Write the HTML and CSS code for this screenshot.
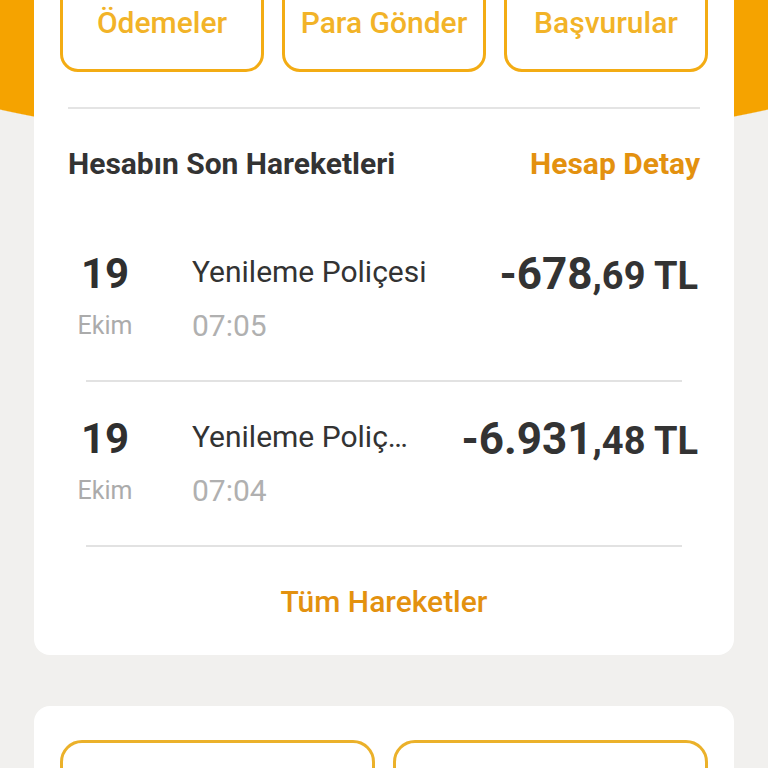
FILE: index.html
```html
<!DOCTYPE html>
<html lang="tr">
<head>
    <meta charset="UTF-8">
    <meta name="viewport" content="width=device-width, initial-scale=1.0">
    <title>Hesabım</title>
    <link rel="stylesheet" href="styles.css">
</head>
<body>
    <div id="page">
        <!-- Hesap kartı -->
        <div class="card account-card">
            <div class="quick-actions">
                <button class="quick-button">Ödemeler</button>
                <button class="quick-button">Para Gönder</button>
                <button class="quick-button">Başvurular</button>
            </div>

            <div class="divider"></div>

            <div class="section-header">
                <span class="section-title">Hesabın Son Hareketleri</span>
                <a class="section-link">Hesap Detay</a>
            </div>

            <div class="transaction">
                <div class="tx-date">
                    <div class="tx-day">19</div>
                    <div class="tx-month">Ekim</div>
                </div>
                <div class="tx-info">
                    <div class="tx-title">Yenileme Poliçesi</div>
                    <div class="tx-time">07:05</div>
                </div>
                <div class="tx-amount"><span class="amount-main">-678</span>,69 TL</div>
            </div>
            <div class="row-divider"></div>

            <div class="transaction">
                <div class="tx-date">
                    <div class="tx-day">19</div>
                    <div class="tx-month">Ekim</div>
                </div>
                <div class="tx-info">
                    <div class="tx-title">Yenileme Poliçesi</div>
                    <div class="tx-time">07:04</div>
                </div>
                <div class="tx-amount"><span class="amount-main">-6.931</span>,48 TL</div>
            </div>
            <div class="row-divider"></div>

            <a class="all-link">Tüm Hareketler</a>
        </div>

        <!-- Alt kart -->
        <div class="card bottom-card">
            <div class="wide-actions">
                <button class="quick-button wide"></button>
                <button class="quick-button wide"></button>
            </div>
        </div>
    </div>
</body>
</html>
```

FILE: styles.css
```css
body {
    margin: 0;
    padding: 0;
    background: radial-gradient(ellipse 600px 159px at 50% -12px, #f5a300 99.4%, #f1f0ee 100%) no-repeat, #f1f0ee;
    font-family: 'Roboto', 'Liberation Sans', sans-serif;
    overflow: hidden;
    height: 768px;
}

#page {
    padding: 0 34px;
}

.card {
    background: white;
    border-radius: 16px;
}

.account-card {
    margin-top: -80px;
    padding: 20px 26px 37px;
}

.quick-actions {
    display: grid;
    grid-template-columns: repeat(3, 1fr);
    gap: 18px;
}

.quick-button {
    height: 132px;
    display: flex;
    align-items: flex-end;
    justify-content: center;
    padding: 0 0 31px;
    background: white;
    border: 3px solid #f3ac14;
    border-radius: 18px;
    color: #f2b328;
    font-family: inherit;
    font-size: 30px;
    font-weight: 500;
    line-height: 30px;
    white-space: nowrap;
}

.divider {
    height: 2px;
    background: #e4e4e4;
    margin: 35px 8px 0;
}

.section-header {
    display: flex;
    justify-content: space-between;
    align-items: center;
    margin: 39px 8px 37px;
    line-height: 32px;
}

.section-title {
    font-size: 30px;
    font-weight: 700;
    color: #333333;
}

.section-link {
    font-size: 30px;
    font-weight: 700;
    color: #e3910f;
}

.transaction {
    display: flex;
    align-items: flex-start;
    padding: 35px 10px 39px 8px;
}

.tx-date {
    width: 74px;
    text-align: center;
    flex-shrink: 0;
}

.tx-day {
    font-size: 42px;
    font-weight: 700;
    line-height: 44px;
    color: #2f2f2f;
}

.tx-month {
    margin-top: 15px;
    font-size: 25px;
    line-height: 30px;
    color: #ababab;
}

.tx-info {
    flex: 1;
    min-width: 0;
    margin: 0 48px 0 50px;
}

.tx-title {
    font-size: 30px;
    line-height: 40px;
    color: #333333;
    white-space: nowrap;
    overflow: hidden;
    text-overflow: ellipsis;
}

.tx-time {
    margin-top: 19px;
    font-size: 30px;
    line-height: 30px;
    color: #b0b0b0;
}

.tx-amount {
    flex-shrink: 0;
    font-size: 38px;
    font-weight: 700;
    line-height: 44px;
    color: #333333;
    white-space: nowrap;
}

.amount-main {
    font-size: 44px;
}

.row-divider {
    height: 2px;
    background: #e2e2e2;
    margin: 0 26px;
}

.all-link {
    display: block;
    margin-top: 39px;
    text-align: center;
    font-size: 30px;
    font-weight: 500;
    line-height: 32px;
    color: #e3910f;
}

.bottom-card {
    margin-top: 51px;
    padding: 34px 26px;
}

.wide-actions {
    display: grid;
    grid-template-columns: 1fr 1fr;
    gap: 18px;
}

.quick-button.wide {
    height: 120px;
    border-color: #ebb12a;
    border-radius: 22px;
}
```
